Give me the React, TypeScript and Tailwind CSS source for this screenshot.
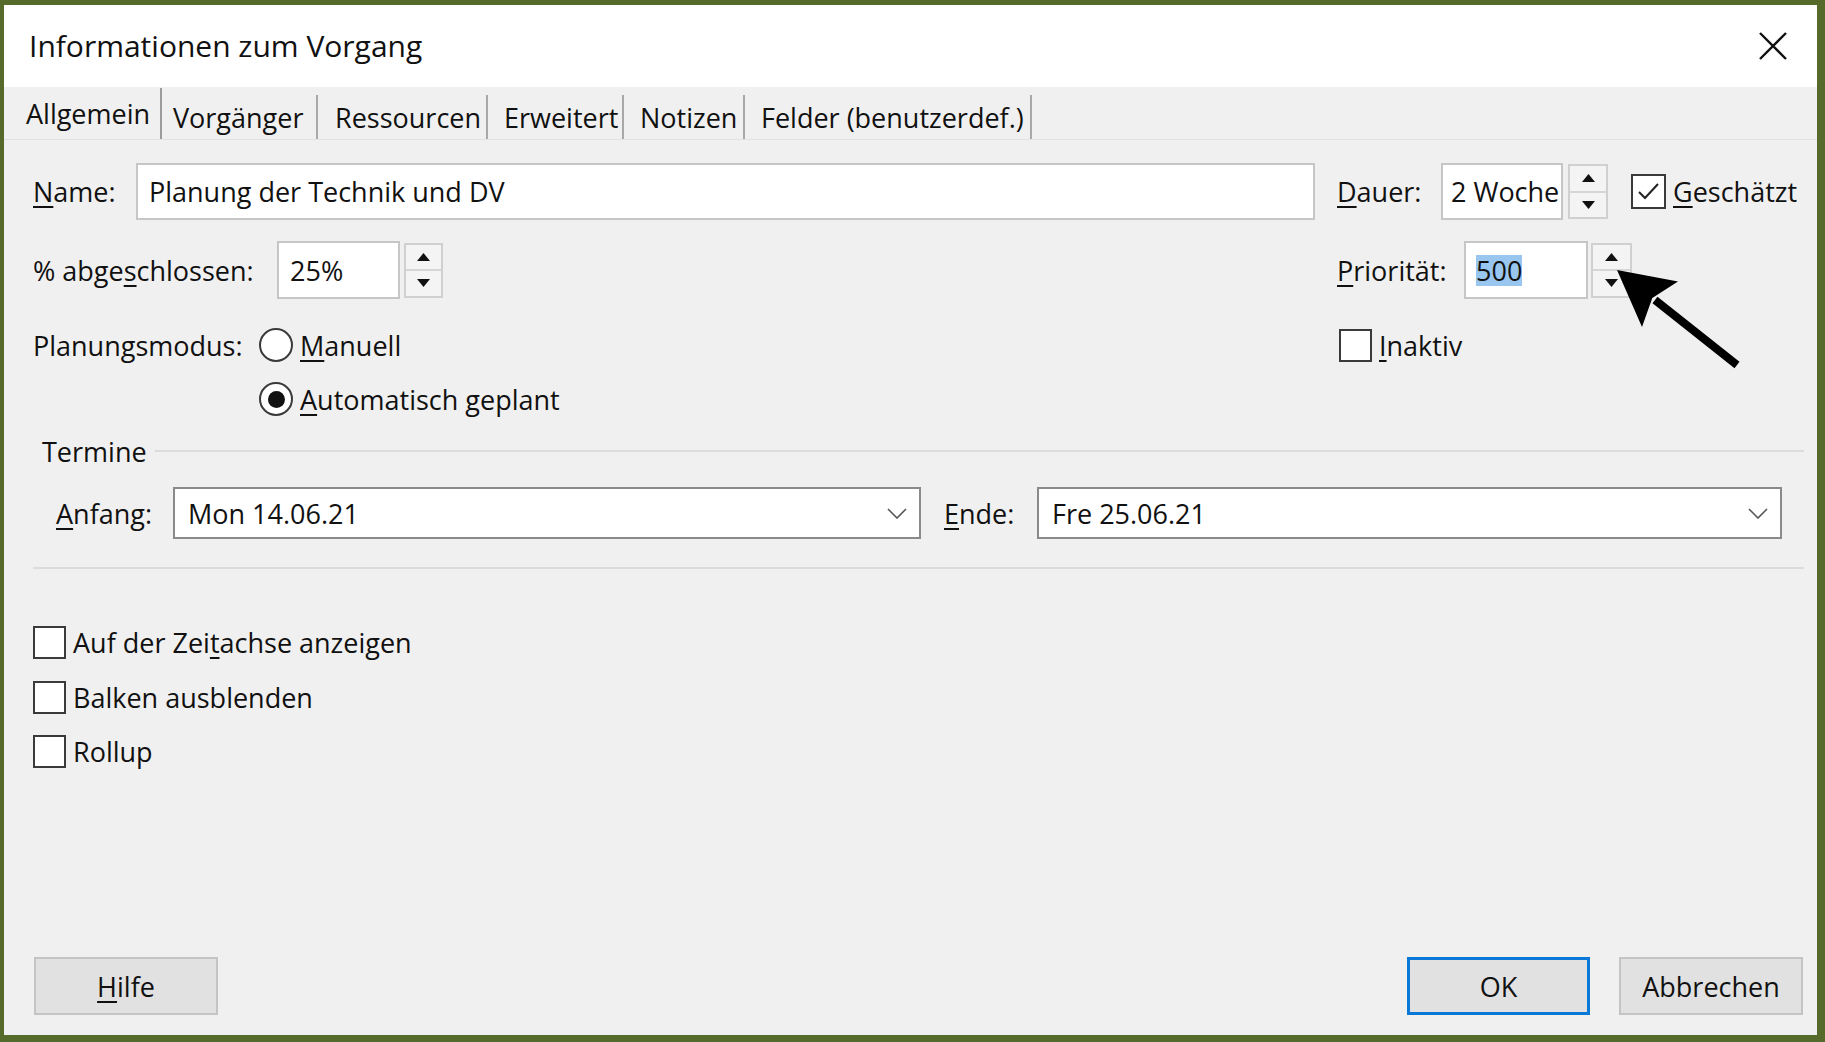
import React from 'react'

const tabs = [
  { label: 'Allgemein', cls: 'w-[158px] pl-[22px] h-[51px] border-r-2 border-[#9c9c9c]' },
  { label: 'Vorgänger', cls: 'w-[156px] pl-[11px] h-[44px] border-r-2 border-[#a8a8a8]' },
  { label: 'Ressourcen', cls: 'w-[170px] pl-[17px] h-[44px] border-r-2 border-[#a8a8a8]' },
  { label: 'Erweitert', cls: 'w-[136px] pl-[16px] h-[44px] border-r-2 border-[#a8a8a8]' },
  { label: 'Notizen', cls: 'w-[121px] pl-[16px] h-[44px] border-r-2 border-[#a8a8a8]' },
  { label: 'Felder (benutzerdef.)', cls: 'w-[287px] pl-[16px] h-[44px] border-r-2 border-[#a8a8a8]' },
]

function Spinner({ className }: { className: string }) {
  return (
    <div className={`flex flex-col border-2 border-[#d0d0d0] bg-[#f4f4f4] ${className}`}>
      <div className="flex-1 flex items-center justify-center border-b-2 border-[#d6d6d6]">
        <svg width="13" height="8" viewBox="0 0 13 8">
          <path d="M6.5 0L13 8H0z" fill="#111" />
        </svg>
      </div>
      <div className="flex-1 flex items-center justify-center">
        <svg width="13" height="8" viewBox="0 0 13 8">
          <path d="M0 0H13L6.5 8z" fill="#111" />
        </svg>
      </div>
    </div>
  )
}

function Checkbox({ checked, className = '' }: { checked?: boolean; className?: string }) {
  return (
    <div className={`w-[33px] h-[33px] shrink-0 bg-white border-2 border-[#3a3a3a] flex items-center justify-center ${className}`}>
      {checked && (
        <svg width="27" height="27" viewBox="0 0 27 27">
          <path d="M4 14L10 20L23 6" stroke="#222" strokeWidth="2" fill="none" />
        </svg>
      )}
    </div>
  )
}

function Radio({ checked }: { checked?: boolean }) {
  return (
    <div className="w-[34px] h-[34px] shrink-0 rounded-full bg-white border-2 border-[#3a3a3a] flex items-center justify-center">
      {checked && <div className="w-[17px] h-[17px] rounded-full bg-[#111]" />}
    </div>
  )
}

function Chevron() {
  return (
    <svg width="20" height="11" viewBox="0 0 20 11">
      <path d="M1 1L10 10L19 1" stroke="#555" strokeWidth="1.6" fill="none" />
    </svg>
  )
}

export default function App() {
  return (
    <div className="relative w-[1825px] h-[1042px] bg-[#566a2c] pt-[5px] pl-[4px] pr-[8px] pb-[7px] flex font-['Open_Sans',sans-serif] text-[27px] text-[#111] leading-none">
      <div className="flex-1 flex flex-col bg-[#f0f0f0]">
        {/* Title bar */}
        <div className="h-[82px] bg-white flex items-center justify-between pl-[25px] pr-[29px]">
          <span className="text-[30px]">Informationen zum Vorgang</span>
          <svg width="30" height="30" viewBox="0 0 30 30">
            <path d="M2 2L28 28M28 2L2 28" stroke="#111" strokeWidth="2.4" />
          </svg>
        </div>

        {/* Tabs */}
        <div className="h-[53px] flex items-end border-b border-[#e2e2e2]">
          {tabs.map(t => (
            <div key={t.label} className={`flex items-center whitespace-nowrap ${t.cls}`}>
              {t.label}
            </div>
          ))}
        </div>

        {/* Body */}
        <div className="flex-1 flex flex-col pl-[29px] pr-[13px] pb-[20px]">
          {/* Name / Dauer */}
          <div className="mt-[23px] h-[57px] flex items-center">
            <div className="w-[1304px] h-full flex items-center">
              <span className="w-[103px]"><u className="underline-offset-4">N</u>ame:</span>
              <div className="w-[1179px] h-full bg-white border-2 border-[#c6c6c6] flex items-center pl-[11px]">
                Planung der Technik und DV
              </div>
            </div>
            <span className="w-[104px]"><u className="underline-offset-4">D</u>auer:</span>
            <div className="w-[122px] h-full bg-white border-2 border-[#c6c6c6] flex items-center pl-[8px] whitespace-nowrap">
              2 Woche
            </div>
            <Spinner className="ml-[5px] w-[40px] h-[55px]" />
            <Checkbox checked className="ml-[23px] w-[35px] h-[35px]" />
            <span className="ml-[7px]"><u className="underline-offset-4">G</u>eschätzt</span>
          </div>

          {/* % abgeschlossen / Priorität */}
          <div className="mt-[21px] h-[58px] flex items-center">
            <div className="w-[1304px] h-full flex items-center">
              <span className="w-[244px]">% abge<u className="underline-offset-4">s</u>chlossen:</span>
              <div className="w-[123px] h-full bg-white border-2 border-[#c6c6c6] flex items-center pl-[11px]">25%</div>
              <Spinner className="ml-[4px] w-[39px] h-[55px]" />
            </div>
            <span className="w-[127px]"><u className="underline-offset-4">P</u>riorität:</span>
            <div className="w-[124px] h-full bg-white border-2 border-[#c6c6c6] flex items-center pl-[10px]">
              <span className="bg-[#99c6ee] h-[31px] flex items-center">500</span>
            </div>
            <Spinner className="ml-[3px] w-[41px] h-[55px]" />
          </div>

          {/* Planungsmodus / Inaktiv */}
          <div className="mt-[26px] h-[40px] flex items-center">
            <div className="w-[1304px] h-full flex items-center">
              <span className="w-[226px]">Planungsmodus:</span>
              <Radio />
              <span className="ml-[7px]"><u className="underline-offset-4">M</u>anuell</span>
            </div>
            <Checkbox className="ml-[2px]" />
            <span className="ml-[7px]"><u className="underline-offset-4">I</u>naktiv</span>
          </div>
          <div className="mt-[14px] h-[40px] flex items-center pl-[226px]">
            <Radio checked />
            <span className="ml-[7px]"><u className="underline-offset-4">A</u>utomatisch geplant</span>
          </div>

          {/* Termine */}
          <div className="mt-[17px] h-[30px] flex items-center">
            <span className="ml-[9px]">Termine</span>
            <div className="flex-1 ml-[8px] h-[2px] bg-[#dcdcdc]" />
          </div>
          <div className="mt-[21px] h-[52px] flex items-center">
            <span className="ml-[23px] w-[117px]"><u className="underline-offset-4">A</u>nfang:</span>
            <div className="w-[748px] h-full bg-white border-2 border-[#8a8a8a] flex items-center justify-between pl-[13px] pr-[12px]">
              <span>Mon 14.06.21</span>
              <Chevron />
            </div>
            <span className="ml-[23px] w-[93px]"><u className="underline-offset-4">E</u>nde:</span>
            <div className="w-[745px] h-full bg-white border-2 border-[#8a8a8a] flex items-center justify-between pl-[13px] pr-[12px]">
              <span>Fre 25.06.21</span>
              <Chevron />
            </div>
          </div>
          <div className="mt-[28px] h-[2px] bg-[#dcdcdc]" />

          {/* Checkboxes */}
          <div className="mt-[57px] h-[33px] flex items-center">
            <Checkbox />
            <span className="ml-[7px]">Auf der Zei<u className="underline-offset-4">t</u>achse anzeigen</span>
          </div>
          <div className="mt-[22px] h-[33px] flex items-center">
            <Checkbox />
            <span className="ml-[7px]">Balken ausblenden</span>
          </div>
          <div className="mt-[21px] h-[33px] flex items-center">
            <Checkbox />
            <span className="ml-[7px]">Rollup</span>
          </div>

          {/* Buttons */}
          <div className="mt-auto h-[58px] flex items-stretch">
            <button className="ml-[1px] w-[184px] bg-[#e1e1e1] border-2 border-[#c4c4c4]">
              <u className="underline-offset-4">H</u>ilfe
            </button>
            <button className="ml-auto w-[183px] bg-[#e1e1e1] border-[3px] border-[#0a78d7]">OK</button>
            <button className="ml-[29px] mr-[1px] w-[184px] bg-[#e1e1e1] border-2 border-[#c4c4c4]">Abbrechen</button>
          </div>
        </div>
      </div>

      {/* Annotation arrow */}
      <svg className="absolute left-[1600px] top-[260px]" width="150" height="115" viewBox="0 0 150 115">
        <path d="M55 40L137 105" stroke="#000" strokeWidth="8" />
        <path d="M17 10L78 21.5L52.3 37.9L42 67z" fill="#000" />
      </svg>
    </div>
  )
}
